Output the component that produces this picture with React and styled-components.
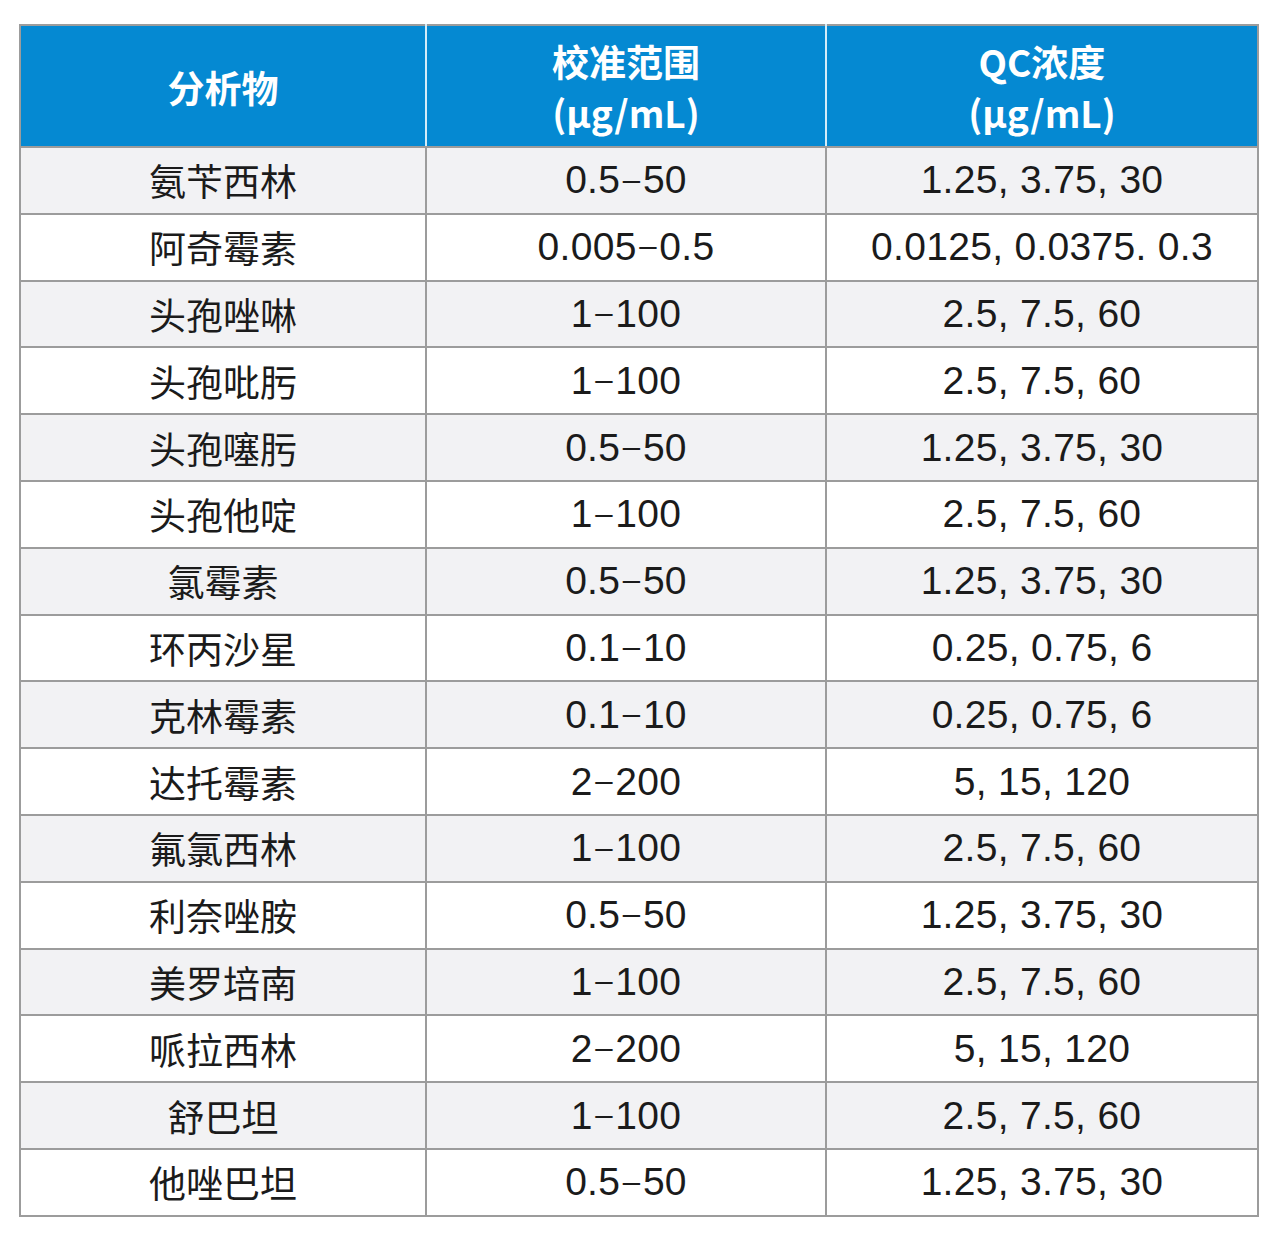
import React from 'react'
import styled, { createGlobalStyle } from 'styled-components'

const GlobalStyle = createGlobalStyle`
  html, body {
    margin: 0;
    padding: 0;
    background: #ffffff;
  }
  body {
    font-family: 'Liberation Sans', 'Noto Sans CJK SC', sans-serif;
  }
`

const Page = styled.div`
  padding: 24px 23px 31px 19px;
`

const Table = styled.table`
  width: 1238px;
  border-collapse: collapse;
  table-layout: fixed;
  border: 2px solid #9c9c9c;
`

const HeadCell = styled.th`
  height: 118px;
  padding: 2px 0 0;
  background: #0589d2;
  color: #ffffff;
  font-family: 'Noto Sans CJK SC', sans-serif;
  font-weight: 700;
  font-size: 37px;
  line-height: 51px;
  text-align: center;
  vertical-align: middle;
  border-bottom: 2px solid #9c9c9c;
  border-left: 2px solid #d4ecf8;
  &:first-child {
    border-left: none;
  }
`

const Row = styled.tr`
  background: ${(p) => (p.$shade ? '#f2f2f4' : '#ffffff')};
`

const Cell = styled.td`
  height: 64.8px;
  padding: 0;
  text-align: center;
  vertical-align: middle;
  color: #1b1b1b;
  font-family: ${(p) =>
    p.$cjk ? "'Noto Sans CJK SC', sans-serif" : "'Liberation Sans', 'Noto Sans CJK SC', sans-serif"};
  font-size: ${(p) => (p.$cjk ? '37px' : '39px')};
  letter-spacing: ${(p) => (p.$cjk ? '0' : '0.3px')};
  border: 2px solid #9c9c9c;
`

// the range dash in the source is short and sits at mid digit height
const Dash = styled.span`
  font-size: 0.8em;
  vertical-align: 0.12em;
  margin: 0 0.08em;
`

const Range = ({ value }) => {
  const [from, to] = value.split('–')
  return (
    <>
      {from}
      <Dash>–</Dash>
      {to}
    </>
  )
}

const rows = [
  ['氨苄西林', '0.5–50', '1.25, 3.75, 30'],
  ['阿奇霉素', '0.005–0.5', '0.0125, 0.0375. 0.3'],
  ['头孢唑啉', '1–100', '2.5, 7.5, 60'],
  ['头孢吡肟', '1–100', '2.5, 7.5, 60'],
  ['头孢噻肟', '0.5–50', '1.25, 3.75, 30'],
  ['头孢他啶', '1–100', '2.5, 7.5, 60'],
  ['氯霉素', '0.5–50', '1.25, 3.75, 30'],
  ['环丙沙星', '0.1–10', '0.25, 0.75, 6'],
  ['克林霉素', '0.1–10', '0.25, 0.75, 6'],
  ['达托霉素', '2–200', '5, 15, 120'],
  ['氟氯西林', '1–100', '2.5, 7.5, 60'],
  ['利奈唑胺', '0.5–50', '1.25, 3.75, 30'],
  ['美罗培南', '1–100', '2.5, 7.5, 60'],
  ['哌拉西林', '2–200', '5, 15, 120'],
  ['舒巴坦', '1–100', '2.5, 7.5, 60'],
  ['他唑巴坦', '0.5–50', '1.25, 3.75, 30'],
]

const App = () => {
  return (
    <Page>
      <GlobalStyle />
      <Table>
        <colgroup>
          <col style={{ width: '406px' }} />
          <col style={{ width: '400px' }} />
          <col style={{ width: '432px' }} />
        </colgroup>
        <thead>
          <tr>
            <HeadCell>分析物</HeadCell>
            <HeadCell>
              校准范围
              <br />
              (μg/mL)
            </HeadCell>
            <HeadCell>
              QC浓度
              <br />
              (μg/mL)
            </HeadCell>
          </tr>
        </thead>
        <tbody>
          {rows.map((r, i) => (
            <Row key={r[0]} $shade={i % 2 === 0}>
              <Cell $cjk>{r[0]}</Cell>
              <Cell>
                <Range value={r[1]} />
              </Cell>
              <Cell>{r[2]}</Cell>
            </Row>
          ))}
        </tbody>
      </Table>
    </Page>
  )
}

export default App
